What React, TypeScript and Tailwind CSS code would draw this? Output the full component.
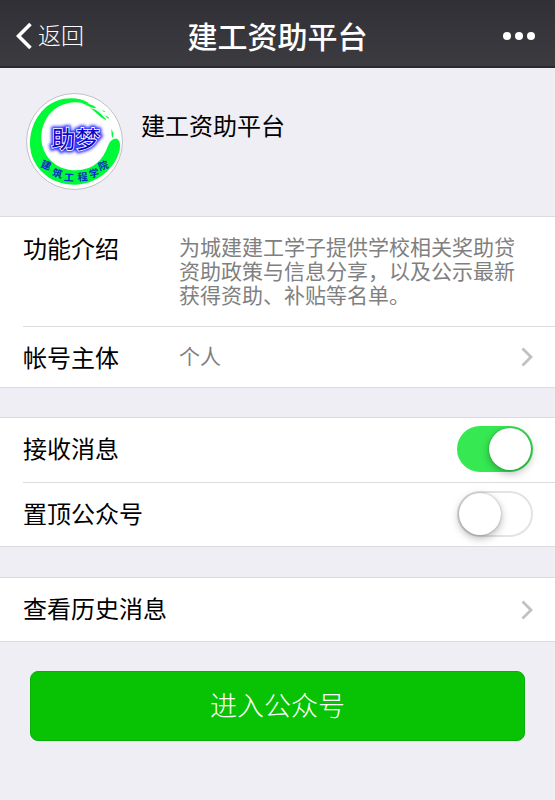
import React from "react";
import { clsx } from "clsx";

const Chevron = () => (
  <svg className="h-5 w-3 shrink-0" viewBox="0 0 12 20" fill="none">
    <path d="M1.5 1.5L10 10L1.5 18.5" stroke="#c0c0c5" strokeWidth="2.8" />
  </svg>
);

const Logo = () => (
  <svg
    className="size-[97px] shrink-0"
    viewBox="33 25 291 291"
    role="img"
    aria-label="助梦 建筑工程学院"
  >
    <defs>
      <filter id="glow" x="-20%" y="-30%" width="140%" height="160%">
        <feGaussianBlur stdDeviation="4" />
      </filter>
    </defs>
    <circle cx="178.5" cy="170.5" r="144" fill="#fff" stroke="#b5b5bb" strokeWidth="2.5" />
    <path
      fill="#00fa37"
      d="M222 56C190 34 128 34 88 72C46 112 34 178 56 226C78 274 128 302 184 300C246 296 300 254 314 196C318 176 312 160 300 162C284 164 280 182 272 200C254 240 218 258 180 257C130 256 90 224 81 178C73 134 92 88 130 66C152 54 176 50 198 54L212 60Z"
    />
    <path
      fill="#00fa37"
      d="M212 54L236 63L244 70L238 71L226 67L214 62ZM226 70L242 75L256 86L272 102L274 107L260 99L248 89L238 80ZM260 76L270 80L268 83ZM268 92L282 98L280 102ZM289 132L295 146L294 160L290 154Z"
    />
    <g
      fontFamily="'Noto Sans CJK SC', sans-serif"
      fontSize="73"
      textAnchor="middle"
    >
      <text x="182" y="190" fill="#2222ff" stroke="#2222ff" strokeWidth="15" filter="url(#glow)" aria-hidden="true">
        助梦
      </text>
      <text x="182" y="190" fill="#0a0ac4" stroke="#fff" strokeWidth="5" paintOrder="stroke">
        助梦
      </text>
    </g>
    <text
      x="76 110 146 189 225 254"
      y="246 273 288 289 280 258"
      rotate="20 14 4 -6 -14 -20"
      fontFamily="'Noto Sans CJK SC', sans-serif"
      fontWeight="700"
      fontSize="30"
      fill="#0a2cc8"
    >
      建筑工程学院
    </text>
  </svg>
);

const Section = ({
  className,
  children,
}: {
  className?: string;
  children: React.ReactNode;
}) => (
  <section className={clsx("border-y border-[#dcdce0] bg-white pl-[23px]", className)}>
    {children}
  </section>
);

const switches = [
  { id: "receive", label: "接收消息", checked: true },
  { id: "pin", label: "置顶公众号", checked: false },
];

const App = () => {
  return (
    <div className="min-h-screen bg-[#efeef4] font-['Liberation_Sans','Noto_Sans_CJK_SC',sans-serif] text-2xl text-black">
      <header className="grid h-[68px] grid-cols-[1fr_auto_1fr] items-center border-b-2 border-[#2a292d] bg-linear-to-b from-[#313036] to-[#3c3b40] pt-1.5 text-white">
        <button className="flex items-center gap-1.5 pl-4 text-[23px] font-light">
          <svg className="h-7 w-4" viewBox="0 0 16 28" fill="none">
            <path d="M14.5 2L2.5 14L14.5 26" stroke="#fff" strokeWidth="3.6" />
          </svg>
          返回
        </button>
        <h1 className="pt-1 text-[30px] leading-9 font-medium">建工资助平台</h1>
        <button className="justify-self-end pr-5" aria-label="更多">
          <svg className="h-2 w-8" viewBox="0 0 32 8" fill="#fff">
            <circle cx="4" cy="4" r="4" />
            <circle cx="16" cy="4" r="4" />
            <circle cx="28" cy="4" r="4" />
          </svg>
        </button>
      </header>

      <div className="flex gap-[18px] px-[26px] pt-[25px] pb-[26px]">
        <Logo />
        <h2 className="pt-[18px] leading-8">建工资助平台</h2>
      </div>

      <Section>
        <dl className="flex border-b border-[#dcdce0] pt-[19px] pr-10 pb-[18px]">
          <dt className="w-[156px] shrink-0 leading-7">功能介绍</dt>
          <dd className="text-[21px] leading-6 text-[#808080]">
            为城建建工学子提供学校相关奖助贷资助政策与信息分享，以及公示最新获得资助、补贴等名单。
          </dd>
        </dl>
        <a href="#account" className="flex h-[60px] items-center pr-[22px]">
          <span className="w-[156px] shrink-0 pt-1">帐号主体</span>
          <span className="flex-1 text-[21px] text-[#808080]">个人</span>
          <Chevron />
        </a>
      </Section>

      <Section className="mt-[29px]">
        {switches.map((item, index) => (
          <div
            key={item.id}
            className={clsx(
              "flex h-16 items-center justify-between pr-[22px]",
              index > 0 && "border-t border-[#dcdce0]"
            )}
          >
            <label htmlFor={item.id}>{item.label}</label>
            <input
              id={item.id}
              type="checkbox"
              role="switch"
              defaultChecked={item.checked}
              className="mb-0.5 flex h-[46px] w-[76px] appearance-none items-center rounded-full border-2 border-[#e3e3e3] bg-white before:size-[42px] before:rounded-full before:bg-white before:shadow-[0_3px_8px_rgba(0,0,0,0.3),0_0_2px_rgba(0,0,0,0.3)] checked:justify-end checked:border-[#36e953] checked:bg-[#36e953]"
            />
          </div>
        ))}
      </Section>

      <Section className="mt-[30px]">
        <a href="#history" className="flex h-[63px] items-center justify-between pr-[22px]">
          查看历史消息
          <Chevron />
        </a>
      </Section>

      <div className="px-[30px] pt-[29px] pb-[30px]">
        <button className="h-[70px] w-full rounded-lg border border-[#09ae09] bg-[#08c304] pt-1 text-[27px] font-light text-white">
          进入公众号
        </button>
      </div>
    </div>
  );
};

export default App;
